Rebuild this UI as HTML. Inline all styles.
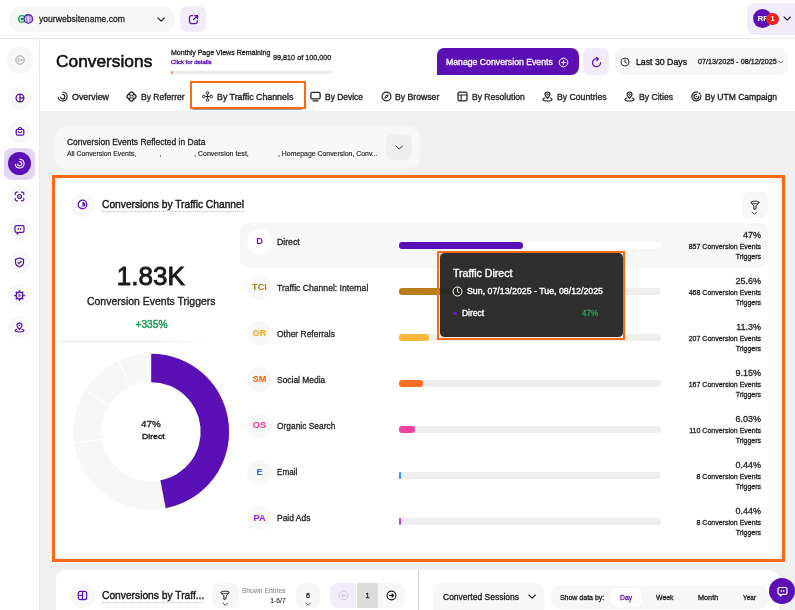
<!DOCTYPE html>
<html lang="en">
<head>
<meta charset="utf-8">
<title>Conversions</title>
<style>
*{box-sizing:border-box;margin:0;padding:0}
html,body{width:795px;height:610px;overflow:hidden;background:#fff;font-family:"Liberation Sans",sans-serif;color:#1f1f1f}
.abs{position:absolute}
#app{position:relative;width:795px;height:610px;overflow:hidden;background:transparent;will-change:transform}
.t{position:absolute;white-space:nowrap;line-height:1}
svg{position:absolute;overflow:visible}
</style>
</head>
<body>
<div id="app">

<!-- page background -->
<div class="abs" style="left:39px;top:110.5px;width:756px;height:500px;background:#f0f0f0;"></div>
<!-- header -->
<div class="abs" style="left:0px;top:37.5px;width:795px;height:1px;background:#e9e9e9;"></div>
<div class="abs" style="left:38.5px;top:38px;width:1px;height:572px;background:#e9e9e9;"></div>
<div class="abs" style="left:10px;top:6px;width:164px;height:26px;background:#f7f7f7;border-radius:9px;"></div>
<svg style="left:14px;top:11px" width="22" height="16" viewBox="14 11 22 16">
<circle cx="22" cy="18.900" r="5.300" fill="#dcf3e4"/>
<circle cx="22" cy="18.900" r="3.200" fill="#f0faf3" stroke="#22a35d" stroke-width="1.300"/>
<path d="M22 20.600c-.9-.7-1.700-1.300-1.700-2.100 0-.9 1.200-1.200 1.700-.4.500-.8 1.700-.5 1.700.4 0 .8-.8 1.400-1.700 2.100z" fill="#128a43"/>
<circle cx="28.300" cy="18.900" r="4.200" fill="#cdb8ef" stroke="#4c0fb2" stroke-width="1.400"/>
<path d="M28.300 14.800v8.200M24.300 18.900h8M25 16.900h6.600M25 20.900h6.600" stroke="#f3ecfc" stroke-width=".5" fill="none"/>
<ellipse cx="28.300" cy="18.900" rx="1.900" ry="4" fill="none" stroke="#7a45cf" stroke-width=".6"/>
</svg>
<div class="t" style="left:39.30px;top:13.66px;font-size:9.9px;color:#1f1f1f;transform:scaleX(0.8705);transform-origin:0 0;-webkit-text-stroke:0.3px #1f1f1f;">yourwebsitename.com</div>
<svg style="left:156.80px;top:16.60px" width="8.4" height="5.2" viewBox="0 0 8.4 5.2"><path d="M1 1L4.2 4.2L7.4 1" fill="none" stroke="#222" stroke-width="1.1" stroke-linecap="round" stroke-linejoin="round"/></svg>
<div class="abs" style="left:180.4px;top:6px;width:25.8px;height:26px;background:#f1ebfb;border-radius:7px;"></div>
<svg style="left:187.80px;top:13.50px" width="11" height="11" viewBox="0 0 11 11"><path d="M4.600 1.700H3.300A1.800 1.800 0 0 0 1.500 3.500v4.200A1.800 1.800 0 0 0 3.300 9.500h4.200a1.800 1.800 0 0 0 1.800-1.800V6.500" fill="none" stroke="#5a10b4" stroke-width="1.250" stroke-linecap="round"/><path d="M6.700 1.500h2.900v2.900M9.400 1.700L5.600 5.500" fill="none" stroke="#5a10b4" stroke-width="1.250" stroke-linecap="round" stroke-linejoin="round"/></svg>
<div class="abs" style="left:746.5px;top:3px;width:60px;height:32px;background:#f1ebfb;border-radius:8px;"></div>
<div class="abs" style="left:752.6px;top:9.400px;width:19px;height:19px;border-radius:50%;background:#5a10b4"></div>
<div class="t" style="left:757.60px;top:15.09px;font-size:8px;color:#fff;font-weight:700;">RF</div>
<div class="abs" style="left:766.3px;top:12.900px;width:12.500px;height:12.500px;border-radius:50%;background:#e8241a"></div>
<div class="t" style="left:770.51px;top:15.44px;font-size:7.5px;color:#fff;font-weight:700;">1</div>
<svg style="left:783.30px;top:16.20px" width="8.4" height="5.2" viewBox="0 0 8.4 5.2"><path d="M1 1L4.2 4.2L7.4 1" fill="none" stroke="#222" stroke-width="1.1" stroke-linecap="round" stroke-linejoin="round"/></svg>
<!-- sidebar -->
<div class="abs" style="left:6.9px;top:47px;width:26.4px;height:26.6px;background:#f7f7f7;border-radius:10px;"></div>
<div class="abs" style="left:8px;top:86.6px;width:23px;height:23px;border-radius:50%;background:#f8f8f8"></div>
<div class="abs" style="left:8px;top:119.7px;width:23px;height:23px;border-radius:50%;background:#f8f8f8"></div>
<div class="abs" style="left:8px;top:185.1px;width:23px;height:23px;border-radius:50%;background:#f8f8f8"></div>
<div class="abs" style="left:8px;top:217.7px;width:23px;height:23px;border-radius:50%;background:#f8f8f8"></div>
<div class="abs" style="left:8px;top:250.8px;width:23px;height:23px;border-radius:50%;background:#f8f8f8"></div>
<div class="abs" style="left:8px;top:283.6px;width:23px;height:23px;border-radius:50%;background:#f8f8f8"></div>
<div class="abs" style="left:8px;top:316.3px;width:23px;height:23px;border-radius:50%;background:#f8f8f8"></div>
<div class="abs" style="left:4px;top:148px;width:31px;height:31.6px;background:#e3d5f6;border-radius:8px;"></div>
<div class="abs" style="left:7.800px;top:151.900px;width:23.300px;height:23.300px;border-radius:50%;background:#5a10b4"></div>
<svg style="left:14.60px;top:55.20px" width="10" height="10" viewBox="0 0 10 10"><circle cx="5" cy="5" r="4.200" fill="none" stroke="#8d8d8d" stroke-width=".8"/><path d="M3.200 3v4" stroke="#8d8d8d" stroke-width=".8"/><path d="M4.600 5h2.600M6.200 4l1 1-1 1" fill="none" stroke="#8d8d8d" stroke-width=".7"/></svg>
<svg style="left:14.60px;top:93.10px" width="10" height="10" viewBox="0 0 10 10"><circle cx="5" cy="5" r="3.900" fill="none" stroke="#5a10b4" stroke-width="1.300"/><path d="M5 1.100v7.800M5 5h3.900" fill="none" stroke="#5a10b4" stroke-width="1.300"/></svg>
<svg style="left:14.60px;top:126.20px" width="10" height="10" viewBox="0 0 10 10"><rect x="1.200" y="3.300" width="7.600" height="5.900" rx="1.500" fill="none" stroke="#5a10b4" stroke-width="1.250"/><path d="M3.300 3.300a1.700 2 0 0 1 3.400 0" fill="none" stroke="#5a10b4" stroke-width="1.100"/><path d="M3.300 5.300a1.700 1.500 0 0 0 3.400 0" fill="none" stroke="#5a10b4" stroke-width="1.100" stroke-linecap="round"/></svg>
<svg style="left:14.10px;top:158.00px" width="11" height="11" viewBox="0 0 11 11"><path d="M5.700 1.200A4.400 4.400 0 1 1 1.300 6.400" fill="none" stroke="#fff" stroke-width="1.150" stroke-linecap="round"/><path d="M5.700 3.600A2.100 2.100 0 1 1 3.600 6.100" fill="none" stroke="#fff" stroke-width="1.150" stroke-linecap="round"/></svg>
<svg style="left:14.10px;top:191.10px" width="11" height="11" viewBox="0 0 11 11"><path d="M1.200 3.600V2.700a1.500 1.500 0 0 1 1.500-1.500h.9M7.400 1.200h.9a1.500 1.500 0 0 1 1.500 1.500v.9M9.800 7.400v.9a1.500 1.500 0 0 1-1.500 1.500h-.9M3.600 9.800h-.9a1.500 1.500 0 0 1-1.500-1.500v-.9" fill="none" stroke="#5a10b4" stroke-width="1.200" stroke-linecap="round"/><circle cx="5.500" cy="5.500" r="2" fill="none" stroke="#5a10b4" stroke-width="1.200"/><path d="M4.700 5.500l.6.600 1-1.100" fill="none" stroke="#5a10b4" stroke-width=".7"/></svg>
<svg style="left:14.10px;top:223.90px" width="11" height="11" viewBox="0 0 11 11"><path d="M2.600 1.500h5.800A1.600 1.600 0 0 1 10 3.100v3.600A1.600 1.600 0 0 1 8.400 8.300H5.200L3.200 10V8.300H2.600A1.600 1.600 0 0 1 1 6.700V3.100A1.600 1.600 0 0 1 2.600 1.500z" fill="none" stroke="#5a10b4" stroke-width="1.250" stroke-linejoin="round"/><path d="M4.300 4.300v1.200M6.700 4.300v1.200" stroke="#5a10b4" stroke-width="1.100" stroke-linecap="round"/></svg>
<svg style="left:14.10px;top:256.90px" width="11" height="11" viewBox="0 0 11 11"><path d="M5.500 1l4 1.400v3.200c0 2.200-1.700 3.600-4 4.400-2.300-.8-4-2.200-4-4.400V2.400z" fill="none" stroke="#5a10b4" stroke-width="1.250" stroke-linejoin="round"/><path d="M3.900 5.400l1.200 1.200 2.100-2.300" fill="none" stroke="#5a10b4" stroke-width="1.150" stroke-linecap="round" stroke-linejoin="round"/></svg>
<svg style="left:14.10px;top:289.70px" width="11" height="11" viewBox="0 0 11 11"><path d="M5.500 .9v1.200" stroke="#5a10b4" stroke-width="1.700" stroke-linecap="round" transform="rotate(0 5.500 5.500)"/><path d="M5.500 .9v1.200" stroke="#5a10b4" stroke-width="1.700" stroke-linecap="round" transform="rotate(45 5.500 5.500)"/><path d="M5.500 .9v1.200" stroke="#5a10b4" stroke-width="1.700" stroke-linecap="round" transform="rotate(90 5.500 5.500)"/><path d="M5.500 .9v1.200" stroke="#5a10b4" stroke-width="1.700" stroke-linecap="round" transform="rotate(135 5.500 5.500)"/><path d="M5.500 .9v1.200" stroke="#5a10b4" stroke-width="1.700" stroke-linecap="round" transform="rotate(180 5.500 5.500)"/><path d="M5.500 .9v1.200" stroke="#5a10b4" stroke-width="1.700" stroke-linecap="round" transform="rotate(225 5.500 5.500)"/><path d="M5.500 .9v1.200" stroke="#5a10b4" stroke-width="1.700" stroke-linecap="round" transform="rotate(270 5.500 5.500)"/><path d="M5.500 .9v1.200" stroke="#5a10b4" stroke-width="1.700" stroke-linecap="round" transform="rotate(315 5.500 5.500)"/><circle cx="5.500" cy="5.500" r="3.300" fill="#f8f8f8" stroke="#5a10b4" stroke-width="1.250"/><path d="M4.800 4.300l1.900 1.200-1.900 1.200z" fill="none" stroke="#5a10b4" stroke-width=".8" stroke-linejoin="round"/></svg>
<svg style="left:14.10px;top:322.30px" width="11" height="11" viewBox="0 0 11 11"><path d="M5.500 7.500C4 6 3 4.900 3 3.600a2.500 2.500 0 0 1 5 0C8 4.900 7 6 5.500 7.500z" fill="none" stroke="#5a10b4" stroke-width="1.150" stroke-linejoin="round"/><circle cx="5.500" cy="3.600" r=".8" fill="#5a10b4"/><path d="M2.900 7.300C1.700 7.600 1.100 8 1.100 8.600c0 .9 2 1.400 4.400 1.400s4.400-.5 4.400-1.400c0-.6-.6-1-1.800-1.300" fill="none" stroke="#5a10b4" stroke-width="1.150" stroke-linecap="round"/></svg>
<!-- title row -->
<div class="t" style="left:56.30px;top:53.10px;font-size:17.2px;color:#111;transform:scaleX(1.0080);transform-origin:0 0;-webkit-text-stroke:0.55px #111;">Conversions</div>
<div class="t" style="left:171.30px;top:49.48px;font-size:7.2px;color:#1f1f1f;transform:scaleX(0.9807);transform-origin:0 0;-webkit-text-stroke:0.3px #1f1f1f;">Monthly Page Views Remaining</div>
<div class="t" style="left:171.30px;top:58.87px;font-size:6px;color:#5a10b4;transform:scaleX(0.9954);transform-origin:0 0;-webkit-text-stroke:0.35px #5a10b4;">Click for details</div>
<div class="t" style="left:273.00px;top:53.58px;font-size:7.2px;color:#1f1f1f;transform:scaleX(1.0077);transform-origin:0 0;-webkit-text-stroke:0.3px #1f1f1f;">99,810 of 100,000</div>
<div class="abs" style="left:171.3px;top:70.8px;width:160.6px;height:3.6px;background:#ebebeb;border-radius:2px;"></div>
<div class="abs" style="left:171.3px;top:70.8px;width:2.2px;height:3.6px;background:#f58b43;border-radius:1px;"></div>
<div class="abs" style="left:436.500px;top:48.400px;width:142.200px;height:26.700px;background:#5a10b4;border-radius:7px 8px 8px 0"></div>
<div class="t" style="left:446.30px;top:57.80px;font-size:8.6px;color:#fff;transform:scaleX(1.0116);transform-origin:0 0;-webkit-text-stroke:0.3px #fff;">Manage Conversion Events</div>
<svg style="left:558.30px;top:56.50px" width="11" height="11" viewBox="0 0 11 11"><circle cx="5.500" cy="5.500" r="4.300" fill="none" stroke="#fff" stroke-width="1"/><path d="M5.500 3.500v4M3.500 5.500h4" stroke="#fff" stroke-width="1.100" stroke-linecap="round"/></svg>
<div class="abs" style="left:583px;top:48.4px;width:26.3px;height:26.7px;background:#f1ebfb;border-radius:7px;"></div>
<svg style="left:590.50px;top:56.50px" width="11" height="11" viewBox="0 0 11 11"><path d="M6.700 1.900A4 4 0 1 0 9.500 5.700" fill="none" stroke="#5a10b4" stroke-width="1.200" stroke-linecap="round"/><path d="M5.600 .5l1.700 1.400-1.500 1.600" fill="none" stroke="#5a10b4" stroke-width="1.200" stroke-linecap="round" stroke-linejoin="round"/></svg>
<div class="abs" style="left:614.6px;top:48.4px;width:173.2px;height:26.7px;background:#f7f7f7;border-radius:8px;"></div>
<svg style="left:620.30px;top:57.00px" width="10" height="10" viewBox="0 0 10 10"><circle cx="5" cy="5" r="4" fill="none" stroke="#222" stroke-width=".9"/><path d="M5 2.700V5.100l1.500.9" fill="none" stroke="#222" stroke-width=".9" stroke-linecap="round"/></svg>
<div class="t" style="left:635.60px;top:57.60px;font-size:9px;color:#1a1a1a;transform:scaleX(0.9709);transform-origin:0 0;-webkit-text-stroke:0.35px #1a1a1a;">Last 30 Days</div>
<div class="t" style="left:698.20px;top:58.68px;font-size:6.8px;color:#1f1f1f;transform:scaleX(1.0651);transform-origin:0 0;-webkit-text-stroke:0.3px #1f1f1f;">07/13/2025 - 08/12/2025</div>
<svg style="left:777.50px;top:59.55px" width="6.2" height="4.1" viewBox="0 0 6.2 4.1"><path d="M1 1L3.1 3.1L5.2 1" fill="none" stroke="#444" stroke-width="0.8" stroke-linecap="round" stroke-linejoin="round"/></svg>
<!-- tabs -->
<div class="t" style="left:72.20px;top:92.50px;font-size:9px;color:#1f1f1f;transform:scaleX(0.9863);transform-origin:0 0;-webkit-text-stroke:0.35px #1f1f1f;">Overview</div>
<div class="t" style="left:141.10px;top:92.50px;font-size:9px;color:#1f1f1f;transform:scaleX(0.9475);transform-origin:0 0;-webkit-text-stroke:0.35px #1f1f1f;">By Referrer</div>
<div class="t" style="left:216.60px;top:92.50px;font-size:9px;color:#1f1f1f;transform:scaleX(0.9798);transform-origin:0 0;-webkit-text-stroke:0.35px #1f1f1f;">By Traffic Channels</div>
<div class="t" style="left:324.80px;top:92.50px;font-size:9px;color:#1f1f1f;transform:scaleX(0.9379);transform-origin:0 0;-webkit-text-stroke:0.35px #1f1f1f;">By Device</div>
<div class="t" style="left:395.30px;top:92.50px;font-size:9px;color:#1f1f1f;transform:scaleX(0.9627);transform-origin:0 0;-webkit-text-stroke:0.35px #1f1f1f;">By Browser</div>
<div class="t" style="left:471.60px;top:92.50px;font-size:9px;color:#1f1f1f;transform:scaleX(0.9508);transform-origin:0 0;-webkit-text-stroke:0.35px #1f1f1f;">By Resolution</div>
<div class="t" style="left:557.10px;top:92.50px;font-size:9px;color:#1f1f1f;transform:scaleX(0.9625);transform-origin:0 0;-webkit-text-stroke:0.35px #1f1f1f;">By Countries</div>
<div class="t" style="left:639.00px;top:92.50px;font-size:9px;color:#1f1f1f;transform:scaleX(0.9573);transform-origin:0 0;-webkit-text-stroke:0.35px #1f1f1f;">By Cities</div>
<div class="t" style="left:704.90px;top:92.50px;font-size:9px;color:#1f1f1f;transform:scaleX(0.9470);transform-origin:0 0;-webkit-text-stroke:0.35px #1f1f1f;">By UTM Campaign</div>
<svg style="left:56.90px;top:91.40px" width="11" height="11" viewBox="0 0 11 11"><path d="M5.700 1A4.500 4.500 0 1 1 1.200 6.300" fill="none" stroke="#222" stroke-width="1.2" stroke-linecap="round"/><path d="M5.700 3.400A2.200 2.200 0 1 1 3.500 6" fill="none" stroke="#222" stroke-width="1.2" stroke-linecap="round"/></svg>
<svg style="left:126.10px;top:91.40px" width="11" height="11" viewBox="0 0 11 11"><rect x="1.900" y="1.900" width="7.200" height="7.200" rx="1.300" fill="none" stroke="#222" stroke-width="1.300" transform="rotate(45 5.500 5.500)"/><path d="M3.200 3.200l1.300 1.300M7.800 3.200L6.500 4.500M3.200 7.800l1.300-1.300M7.800 7.800L6.500 6.500" stroke="#222" stroke-width="1.100"/><rect x="4.300" y="4.300" width="2.400" height="2.400" rx=".5" fill="none" stroke="#222" stroke-width=".9" transform="rotate(45 5.500 5.500)"/></svg>
<svg style="left:201.50px;top:91.40px" width="11" height="11" viewBox="0 0 11 11"><circle cx="5.500" cy="1.900" r="1.300" fill="none" stroke="#222" stroke-width="1"/><circle cx="5.500" cy="9.100" r="1.300" fill="none" stroke="#222" stroke-width="1"/><circle cx="1.800" cy="5.500" r="1.300" fill="none" stroke="#222" stroke-width="1"/><circle cx="9.200" cy="5.500" r="1.300" fill="none" stroke="#222" stroke-width="1"/><path d="M5.500 3.200v4.600M3.100 5.500h4.800" stroke="#222" stroke-width="1"/></svg>
<svg style="left:310.00px;top:91.40px" width="11" height="11" viewBox="0 0 11 11"><rect x=".9" y="1.300" width="9.200" height="6.600" rx="1.500" fill="none" stroke="#222" stroke-width="1.300"/><path d="M3.100 9.900h4.800" stroke="#222" stroke-width="1.300" stroke-linecap="round"/></svg>
<svg style="left:380.50px;top:91.40px" width="11" height="11" viewBox="0 0 11 11"><circle cx="5.500" cy="5.500" r="4.400" fill="none" stroke="#222" stroke-width="1.200"/><path d="M7.200 3.800L6.300 6.300 3.800 7.200l.9-2.500z" fill="none" stroke="#222" stroke-width="1" stroke-linejoin="round"/></svg>
<svg style="left:456.60px;top:91.40px" width="11" height="11" viewBox="0 0 11 11"><rect x="1" y="1.200" width="9" height="8.600" rx="1.600" fill="none" stroke="#222" stroke-width="1.250"/><path d="M1 4h9M4.200 4v5.800" stroke="#222" stroke-width="1.150"/></svg>
<svg style="left:542.00px;top:91.40px" width="11" height="11" viewBox="0 0 11 11"><path d="M5.500 7.300C4 5.800 3 4.800 3 3.500a2.500 2.500 0 0 1 5 0C8 4.800 7 5.800 5.500 7.300z" fill="none" stroke="#222" stroke-width="1.200" stroke-linejoin="round"/><circle cx="5.500" cy="3.500" r=".8" fill="none" stroke="#222" stroke-width=".9"/><path d="M2.800 7C1.600 7.300 1 7.900 1 8.500c0 .9 2 1.500 4.500 1.500s4.500-.6 4.500-1.500c0-.6-.6-1.200-1.800-1.500" fill="none" stroke="#222" stroke-width="1.200" stroke-linecap="round"/></svg>
<svg style="left:624.00px;top:91.40px" width="11" height="11" viewBox="0 0 11 11"><path d="M5.500 7.300C4 5.800 3 4.800 3 3.500a2.500 2.500 0 0 1 5 0C8 4.800 7 5.800 5.500 7.300z" fill="none" stroke="#222" stroke-width="1.200" stroke-linejoin="round"/><circle cx="5.500" cy="3.500" r=".8" fill="none" stroke="#222" stroke-width=".9"/><path d="M2.800 7C1.600 7.300 1 7.900 1 8.500c0 .9 2 1.500 4.500 1.500s4.500-.6 4.500-1.500c0-.6-.6-1.200-1.800-1.500" fill="none" stroke="#222" stroke-width="1.200" stroke-linecap="round"/></svg>
<svg style="left:690.50px;top:91.40px" width="11" height="11" viewBox="0 0 11 11"><path d="M9.700 4.200A4.500 4.500 0 1 1 6.800 1.200" fill="none" stroke="#222" stroke-width="1.200" stroke-linecap="round"/><path d="M7.700 5.200A2.400 2.400 0 1 1 5.800 3.300" fill="none" stroke="#222" stroke-width="1.100" stroke-linecap="round"/><circle cx="5.500" cy="5.500" r=".8" fill="#222"/><circle cx="8.700" cy="2.300" r=".9" fill="#222"/><circle cx="3.900" cy="7.400" r=".7" fill="#222"/><circle cx="7.100" cy="7.700" r=".7" fill="#222"/><circle cx="3.100" cy="4.400" r=".7" fill="#222"/></svg>
<div class="abs" style="left:193px;top:108.8px;width:108.5px;height:1.6px;background:#8c9fb2;"></div>
<div class="abs" style="left:190px;top:80.500px;width:115.500px;height:28.700px;border:2px solid #fb6a0e"></div>
<!-- conversion events reflected card -->
<div class="abs" style="left:55.6px;top:128px;width:363px;height:39px;background:#f8f8f8;border-radius:10px;box-shadow:0 0 0 2px rgba(255,255,255,.35);"></div>
<div class="t" style="left:66.90px;top:138.20px;font-size:9px;color:#1f1f1f;transform:scaleX(0.9410);transform-origin:0 0;-webkit-text-stroke:0.3px #1f1f1f;">Conversion Events Reflected in Data</div>
<div class="t" style="left:66.90px;top:150.68px;font-size:6.8px;color:#1f1f1f;transform:scaleX(1.0118);transform-origin:0 0;-webkit-text-stroke:0.15px #1f1f1f;">All Conversion Events,</div>
<div class="t" style="left:159.50px;top:150.68px;font-size:6.8px;color:#1f1f1f;-webkit-text-stroke:0.1px #1f1f1f;">,</div>
<div class="t" style="left:194.00px;top:150.68px;font-size:6.8px;color:#1f1f1f;transform:scaleX(1.0361);transform-origin:0 0;-webkit-text-stroke:0.15px #1f1f1f;">, Conversion test,</div>
<div class="t" style="left:278.30px;top:150.68px;font-size:6.8px;color:#1f1f1f;transform:scaleX(1.0152);transform-origin:0 0;-webkit-text-stroke:0.15px #1f1f1f;">, Homepage Conversion, Conv...</div>
<div class="abs" style="left:386px;top:134.3px;width:26.4px;height:26px;background:#efefef;border-radius:7px;"></div>
<svg style="left:394.80px;top:144.70px" width="8.4" height="5.2" viewBox="0 0 8.4 5.2"><path d="M1 1L4.2 4.2L7.4 1" fill="none" stroke="#333" stroke-width="1" stroke-linecap="round" stroke-linejoin="round"/></svg>
<!-- main card -->
<div class="abs" style="left:55px;top:178px;width:727px;height:381px;background:#fff;border-radius:10px;"></div>
<div class="abs" style="left:52px;top:175px;width:732.500px;height:386.500px;border:3px solid #fb6a0e"></div>
<div class="abs" style="left:70.500px;top:192.700px;width:24px;height:24px;border-radius:50%;background:#f8f8f8"></div>
<svg style="left:76.90px;top:199.30px" width="11" height="11" viewBox="0 0 11 11"><circle cx="5.500" cy="5.500" r="4.300" fill="none" stroke="#5a10b4" stroke-width="1.200"/><path d="M5.500 5.700V2.700A2.900 2.900 0 0 1 7.700 7.500z" fill="#5a10b4"/><path d="M5.500 5.700L7.700 7.500A2.900 2.900 0 0 1 4 8z" fill="#5a10b4" opacity=".45"/></svg>
<div class="t" style="left:102.30px;top:199.08px;font-size:11.3px;color:#1a1a1a;transform:scaleX(0.9057);transform-origin:0 0;-webkit-text-stroke:0.45px #1a1a1a;">Conversions by Traffic Channel</div>
<div class="abs" style="left:102.300px;top:211.200px;width:142px;height:0;border-top:1px dotted #c4c4c4"></div>
<div class="abs" style="left:742.3px;top:192px;width:25.7px;height:25.7px;background:#f7f7f7;border-radius:7px;"></div>
<svg style="left:749.70px;top:199.70px" width="10" height="10" viewBox="0 0 10 10"><path d="M.9 2.400C.9 .8 9.100 .8 9.100 2.400L6.100 5.900V8.700L3.900 9.500V5.900z" fill="none" stroke="#222" stroke-width="1" stroke-linejoin="round"/><path d="M.9 2.400C.9 3.900 9.100 3.900 9.100 2.400" fill="none" stroke="#222" stroke-width=".8"/></svg>
<svg style="left:751.30px;top:211.35px" width="6.6" height="4.3" viewBox="0 0 6.6 4.3"><path d="M1 1L3.3 3.3L5.6 1" fill="none" stroke="#333" stroke-width="0.9" stroke-linecap="round" stroke-linejoin="round"/></svg>
<div class="t" style="left:116.85px;top:263.10px;font-size:26px;color:#1a1a1a;-webkit-text-stroke:0.9px #1a1a1a;">1.83K</div>
<div class="t" style="left:87.05px;top:296.62px;font-size:10.2px;color:#1f1f1f;transform:scaleX(1.0268);transform-origin:0 0;-webkit-text-stroke:0.35px #1f1f1f;">Conversion Events Triggers</div>
<div class="t" style="left:135.50px;top:319.72px;font-size:10.2px;color:#1f9d57;-webkit-text-stroke:0.5px #1f9d57;">+335%</div>
<div class="abs" style="left:60px;top:340.500px;width:182px;height:1px;background:linear-gradient(90deg,#e6e6e6 0%,#e9e9e9 55%,#ffffff 85%)"></div>
<!-- donut -->
<svg style="left:0;top:0" width="795" height="610" viewBox="0 0 795 610">
<circle cx="151.2" cy="431.7" r="63.7" fill="none" stroke="#f7f7f7" stroke-width="28.400000000000006"/>
<path d="M151.20 353.80A77.9 77.9 0 0 1 165.71 508.24L160.42 480.33A49.5 49.5 0 0 0 151.20 382.20Z" fill="#5a10b4"/>
<line x1="103.24" y1="438.90" x2="73.17" y2="443.41" stroke="#fff" stroke-width="1.200"/>
<line x1="110.14" y1="405.88" x2="84.41" y2="389.70" stroke="#fff" stroke-width="1.200"/>
<line x1="130.79" y1="387.70" x2="118.00" y2="360.13" stroke="#fff" stroke-width="1.200"/>
<line x1="148.52" y1="383.27" x2="146.84" y2="352.92" stroke="#fff" stroke-width="1.200"/>
</svg>
<div class="t" style="left:141.40px;top:418.81px;font-size:9.6px;color:#1f1f1f;transform:scaleX(1.0311);transform-origin:0 0;-webkit-text-stroke:0.35px #1f1f1f;">47%</div>
<div class="t" style="left:142.25px;top:432.59px;font-size:8px;color:#1f1f1f;transform:scaleX(1.0866);transform-origin:0 0;-webkit-text-stroke:0.4px #1f1f1f;">Direct</div>
<!-- channel rows -->
<div class="abs" style="left:240px;top:223px;width:528px;height:45.3px;background:#f7f7f7;border-radius:9px;"></div>
<div class="abs" style="left:246.900px;top:229.40px;width:25px;height:25px;border-radius:50%;background:#fff"></div>
<div class="t" style="left:256.18px;top:237.41px;font-size:9.2px;color:#5a10b4;font-weight:700;">D</div>
<div class="t" style="left:277.00px;top:237.50px;font-size:9px;color:#1f1f1f;transform:scaleX(0.9653);transform-origin:0 0;-webkit-text-stroke:0.3px #1f1f1f;">Direct</div>
<div class="abs" style="left:399.3px;top:242.3px;width:262px;height:6.4px;background:#ffffff;border-radius:3.2px;"></div>
<div class="abs" style="left:399.3px;top:242.3px;width:123.4px;height:6.4px;background:#5a10b4;border-radius:3.2px;"></div>
<div class="t" style="left:743.08px;top:231.20px;font-size:9px;color:#1f1f1f;-webkit-text-stroke:0.3px #1f1f1f;">47%</div>
<div class="t" style="left:688.71px;top:243.28px;font-size:7px;color:#1f1f1f;-webkit-text-stroke:0.3px #1f1f1f;">857 Conversion Events</div>
<div class="t" style="left:735.68px;top:252.78px;font-size:7px;color:#1f1f1f;-webkit-text-stroke:0.3px #1f1f1f;">Triggers</div>
<div class="abs" style="left:246.900px;top:275.42px;width:25px;height:25px;border-radius:50%;background:#f8f8f8"></div>
<div class="t" style="left:252.09px;top:283.43px;font-size:9.2px;color:#b87a16;font-weight:700;">TCI</div>
<div class="t" style="left:277.00px;top:283.52px;font-size:9px;color:#1f1f1f;transform:scaleX(0.9554);transform-origin:0 0;-webkit-text-stroke:0.3px #1f1f1f;">Traffic Channel: Internal</div>
<div class="abs" style="left:399.3px;top:288.32px;width:262px;height:6.4px;background:#eeeeee;border-radius:3.2px;"></div>
<div class="abs" style="left:399.3px;top:288.32px;width:67.3px;height:6.4px;background:#b97d1a;border-radius:3.2px;"></div>
<div class="t" style="left:735.57px;top:277.22px;font-size:9px;color:#1f1f1f;-webkit-text-stroke:0.3px #1f1f1f;">25.6%</div>
<div class="t" style="left:688.71px;top:289.30px;font-size:7px;color:#1f1f1f;-webkit-text-stroke:0.3px #1f1f1f;">468 Conversion Events</div>
<div class="t" style="left:735.68px;top:298.80px;font-size:7px;color:#1f1f1f;-webkit-text-stroke:0.3px #1f1f1f;">Triggers</div>
<div class="abs" style="left:246.900px;top:321.44px;width:25px;height:25px;border-radius:50%;background:#f8f8f8"></div>
<div class="t" style="left:252.61px;top:329.45px;font-size:9.2px;color:#f5a623;font-weight:700;">OR</div>
<div class="t" style="left:277.00px;top:329.54px;font-size:9px;color:#1f1f1f;transform:scaleX(0.9410);transform-origin:0 0;-webkit-text-stroke:0.3px #1f1f1f;">Other Referrals</div>
<div class="abs" style="left:399.3px;top:334.34px;width:262px;height:6.4px;background:#eeeeee;border-radius:3.2px;"></div>
<div class="abs" style="left:399.3px;top:334.34px;width:29.7px;height:6.4px;background:#fbb93c;border-radius:3.2px;"></div>
<div class="t" style="left:736.24px;top:323.24px;font-size:9px;color:#1f1f1f;-webkit-text-stroke:0.3px #1f1f1f;">11.3%</div>
<div class="t" style="left:688.71px;top:335.32px;font-size:7px;color:#1f1f1f;-webkit-text-stroke:0.3px #1f1f1f;">207 Conversion Events</div>
<div class="t" style="left:735.68px;top:344.82px;font-size:7px;color:#1f1f1f;-webkit-text-stroke:0.3px #1f1f1f;">Triggers</div>
<div class="abs" style="left:246.900px;top:367.46px;width:25px;height:25px;border-radius:50%;background:#f8f8f8"></div>
<div class="t" style="left:252.61px;top:375.47px;font-size:9.2px;color:#f2640c;font-weight:700;">SM</div>
<div class="t" style="left:277.00px;top:375.56px;font-size:9px;color:#1f1f1f;transform:scaleX(0.9373);transform-origin:0 0;-webkit-text-stroke:0.3px #1f1f1f;">Social Media</div>
<div class="abs" style="left:399.3px;top:380.36px;width:262px;height:6.4px;background:#eeeeee;border-radius:3.2px;"></div>
<div class="abs" style="left:399.3px;top:380.36px;width:24.2px;height:6.4px;background:#f96f1e;border-radius:3.2px;"></div>
<div class="t" style="left:735.57px;top:369.26px;font-size:9px;color:#1f1f1f;-webkit-text-stroke:0.3px #1f1f1f;">9.15%</div>
<div class="t" style="left:688.71px;top:381.34px;font-size:7px;color:#1f1f1f;-webkit-text-stroke:0.3px #1f1f1f;">167 Conversion Events</div>
<div class="t" style="left:735.68px;top:390.84px;font-size:7px;color:#1f1f1f;-webkit-text-stroke:0.3px #1f1f1f;">Triggers</div>
<div class="abs" style="left:246.900px;top:413.48px;width:25px;height:25px;border-radius:50%;background:#f8f8f8"></div>
<div class="t" style="left:252.86px;top:421.49px;font-size:9.2px;color:#ee2f93;font-weight:700;">OS</div>
<div class="t" style="left:277.00px;top:421.58px;font-size:9px;color:#1f1f1f;transform:scaleX(0.9323);transform-origin:0 0;-webkit-text-stroke:0.3px #1f1f1f;">Organic Search</div>
<div class="abs" style="left:399.3px;top:426.38px;width:262px;height:6.4px;background:#eeeeee;border-radius:3.2px;"></div>
<div class="abs" style="left:399.3px;top:426.38px;width:15.8px;height:6.4px;background:#ef3fa0;border-radius:3.2px;"></div>
<div class="t" style="left:735.57px;top:415.28px;font-size:9px;color:#1f1f1f;-webkit-text-stroke:0.3px #1f1f1f;">6.03%</div>
<div class="t" style="left:689.24px;top:427.36px;font-size:7px;color:#1f1f1f;-webkit-text-stroke:0.3px #1f1f1f;">110 Conversion Events</div>
<div class="t" style="left:735.68px;top:436.86px;font-size:7px;color:#1f1f1f;-webkit-text-stroke:0.3px #1f1f1f;">Triggers</div>
<div class="abs" style="left:246.900px;top:459.50px;width:25px;height:25px;border-radius:50%;background:#f8f8f8"></div>
<div class="t" style="left:256.43px;top:467.51px;font-size:9.2px;color:#2468e8;font-weight:700;">E</div>
<div class="t" style="left:277.00px;top:467.60px;font-size:9px;color:#1f1f1f;transform:scaleX(0.9016);transform-origin:0 0;-webkit-text-stroke:0.3px #1f1f1f;">Email</div>
<div class="abs" style="left:399.3px;top:472.4px;width:262px;height:6.4px;background:#eeeeee;border-radius:3.2px;"></div>
<div class="abs" style="left:399.3px;top:472.4px;width:2.2px;height:6.4px;background:#3d8df2;border-radius:3.2px;"></div>
<div class="t" style="left:735.57px;top:461.30px;font-size:9px;color:#1f1f1f;-webkit-text-stroke:0.3px #1f1f1f;">0.44%</div>
<div class="t" style="left:696.51px;top:473.38px;font-size:7px;color:#1f1f1f;-webkit-text-stroke:0.3px #1f1f1f;">8 Conversion Events</div>
<div class="t" style="left:735.68px;top:482.88px;font-size:7px;color:#1f1f1f;-webkit-text-stroke:0.3px #1f1f1f;">Triggers</div>
<div class="abs" style="left:246.900px;top:505.52px;width:25px;height:25px;border-radius:50%;background:#f8f8f8"></div>
<div class="t" style="left:253.45px;top:513.53px;font-size:9.2px;color:#a21de0;font-weight:700;">PA</div>
<div class="t" style="left:277.00px;top:513.62px;font-size:9px;color:#1f1f1f;transform:scaleX(0.9400);transform-origin:0 0;-webkit-text-stroke:0.3px #1f1f1f;">Paid Ads</div>
<div class="abs" style="left:399.3px;top:518.42px;width:262px;height:6.4px;background:#eeeeee;border-radius:3.2px;"></div>
<div class="abs" style="left:399.3px;top:518.42px;width:2.2px;height:6.4px;background:#b145e8;border-radius:3.2px;"></div>
<div class="t" style="left:735.57px;top:507.32px;font-size:9px;color:#1f1f1f;-webkit-text-stroke:0.3px #1f1f1f;">0.44%</div>
<div class="t" style="left:696.51px;top:519.40px;font-size:7px;color:#1f1f1f;-webkit-text-stroke:0.3px #1f1f1f;">8 Conversion Events</div>
<div class="t" style="left:735.68px;top:528.90px;font-size:7px;color:#1f1f1f;-webkit-text-stroke:0.3px #1f1f1f;">Triggers</div>
<!-- tooltip -->
<div class="abs" style="left:439.6px;top:253.4px;width:183.3px;height:83.8px;background:rgba(38,38,38,.96);border-radius:4.5px;"></div>
<div class="abs" style="left:437px;top:250.900px;width:188.400px;height:89.100px;border:2.400px solid #fb6a0e"></div>
<div class="t" style="left:453.40px;top:268.57px;font-size:10.3px;color:#fff;transform:scaleX(1.0277);transform-origin:0 0;-webkit-text-stroke:0.35px #fff;">Traffic Direct</div>
<svg style="left:452.20px;top:285.70px" width="11" height="11" viewBox="0 0 11 11"><circle cx="5.500" cy="5.500" r="4.500" fill="none" stroke="#fff" stroke-width="1"/><path d="M5.500 2.900V5.600l1.700 1" fill="none" stroke="#fff" stroke-width="1" stroke-linecap="round"/></svg>
<div class="t" style="left:466.70px;top:286.80px;font-size:9px;color:#fff;transform:scaleX(0.9775);transform-origin:0 0;-webkit-text-stroke:0.35px #fff;">Sun, 07/13/2025 - Tue, 08/12/2025</div>
<div class="abs" style="left:452.900px;top:311.700px;width:3.800px;height:3.800px;border-radius:50%;background:#6a1fd6"></div>
<div class="t" style="left:461.70px;top:308.90px;font-size:8.8px;color:#fff;transform:scaleX(0.9615);transform-origin:0 0;-webkit-text-stroke:0.35px #fff;">Direct</div>
<div class="t" style="left:581.70px;top:309.00px;font-size:8.6px;color:#22a35d;transform:scaleX(0.9359);transform-origin:0 0;-webkit-text-stroke:0.3px #22a35d;">47%</div>
<!-- bottom cards -->
<div class="abs" style="left:56.3px;top:569.5px;width:723px;height:60px;background:#fff;border-radius:10px 10px 0 0;"></div>
<div class="abs" style="left:418.2px;top:569.5px;width:1px;height:41px;background:#d2d2d2;"></div>
<div class="abs" style="left:70.400px;top:583.400px;width:24.400px;height:24.400px;border-radius:50%;background:#f8f8f8"></div>
<svg style="left:76.90px;top:590.10px" width="11" height="11" viewBox="0 0 11 11"><rect x="1.300" y="1.400" width="8.400" height="8.200" rx="2" fill="none" stroke="#5a10b4" stroke-width="1.150"/><path d="M5.500 1.400v8.200M1.300 5.500h4.200" stroke="#5a10b4" stroke-width="1.150"/></svg>
<div class="t" style="left:102.40px;top:589.88px;font-size:11.3px;color:#1a1a1a;transform:scaleX(0.9068);transform-origin:0 0;-webkit-text-stroke:0.45px #1a1a1a;">Conversions by Traff...</div>
<div class="abs" style="left:102.400px;top:602px;width:102px;height:0;border-top:1px dotted #c4c4c4"></div>
<div class="abs" style="left:212.3px;top:582.7px;width:26.4px;height:25.7px;background:#f7f7f7;border-radius:7px;"></div>
<svg style="left:220.40px;top:590.00px" width="10" height="10" viewBox="0 0 10 10"><path d="M.9 2.400C.9 .8 9.100 .8 9.100 2.400L6.100 5.900V8.700L3.900 9.500V5.900z" fill="none" stroke="#222" stroke-width="1" stroke-linejoin="round"/><path d="M.9 2.400C.9 3.900 9.100 3.900 9.100 2.400" fill="none" stroke="#222" stroke-width=".8"/></svg>
<svg style="left:222.10px;top:601.85px" width="6.6" height="4.3" viewBox="0 0 6.6 4.3"><path d="M1 1L3.3 3.3L5.6 1" fill="none" stroke="#333" stroke-width="0.9" stroke-linecap="round" stroke-linejoin="round"/></svg>
<div class="t" style="left:241.80px;top:588.18px;font-size:6.8px;color:#8b8b8b;-webkit-text-stroke:0.1px #8b8b8b;">Shown Entries</div>
<div class="t" style="left:270.30px;top:597.58px;font-size:6.8px;color:#333;-webkit-text-stroke:0.15px #333;">1-6/7</div>
<div class="abs" style="left:296.2px;top:582.6px;width:23.6px;height:25.7px;background:#f7f7f7;border-radius:8px;"></div>
<div class="t" style="left:306.00px;top:592.48px;font-size:7.2px;color:#1f1f1f;-webkit-text-stroke:0.3px #1f1f1f;">6</div>
<svg style="left:304.80px;top:602.10px" width="6.4" height="4.2" viewBox="0 0 6.4 4.2"><path d="M1 1L3.2 3.2L5.4 1" fill="none" stroke="#444" stroke-width="0.9" stroke-linecap="round" stroke-linejoin="round"/></svg>
<div class="abs" style="left:330.1px;top:582.6px;width:26.4px;height:25.7px;background:#f3edfb;border-radius:8px 0 0 8px;"></div>
<svg style="left:337.70px;top:590.30px" width="11" height="11" viewBox="0 0 11 11"><circle cx="5.500" cy="5.500" r="4.400" fill="none" stroke="#d5c3f0" stroke-width="1"/><path d="M7.600 5.500H3.600M5 4L3.500 5.500 5 7" fill="none" stroke="#d5c3f0" stroke-width="1" stroke-linecap="round" stroke-linejoin="round"/></svg>
<div class="abs" style="left:356.5px;top:582.6px;width:21.9px;height:25.7px;background:#dcdcdc;"></div>
<div class="t" style="left:365.40px;top:592.08px;font-size:7.2px;color:#1f1f1f;-webkit-text-stroke:0.3px #1f1f1f;">1</div>
<div class="abs" style="left:378.4px;top:582.6px;width:26.4px;height:25.7px;background:#f7f7f7;border-radius:0 8px 8px 0;"></div>
<svg style="left:386.30px;top:590.30px" width="11" height="11" viewBox="0 0 11 11"><circle cx="5.500" cy="5.500" r="4.400" fill="none" stroke="#1a1a1a" stroke-width="1.100"/><path d="M3.400 5.500H7.400M6 4L7.500 5.500 6 7" fill="none" stroke="#1a1a1a" stroke-width="1.100" stroke-linecap="round" stroke-linejoin="round"/></svg>
<div class="abs" style="left:432.7px;top:582.7px;width:111.2px;height:30px;background:#f7f7f7;border-radius:9px 9px 0 0;"></div>
<div class="t" style="left:442.80px;top:592.60px;font-size:9px;color:#1f1f1f;transform:scaleX(0.9435);transform-origin:0 0;-webkit-text-stroke:0.35px #1f1f1f;">Converted Sessions</div>
<svg style="left:528.40px;top:594.40px" width="8.4" height="5.2" viewBox="0 0 8.4 5.2"><path d="M1 1L4.2 4.2L7.4 1" fill="none" stroke="#222" stroke-width="1.1" stroke-linecap="round" stroke-linejoin="round"/></svg>
<div class="abs" style="left:551.2px;top:586.3px;width:217.2px;height:22.5px;background:#f7f7f7;border-radius:8px;"></div>
<div class="t" style="left:559.90px;top:593.78px;font-size:7px;color:#1f1f1f;-webkit-text-stroke:0.3px #1f1f1f;">Show data by:</div>
<div class="abs" style="left:610.6px;top:588.2px;width:31.4px;height:18.4px;background:#fff;border-radius:6px;"></div>
<div class="t" style="left:620.20px;top:593.78px;font-size:7px;color:#5a10b4;transform:scaleX(0.9797);transform-origin:0 0;-webkit-text-stroke:0.3px #5a10b4;">Day</div>
<div class="t" style="left:656.10px;top:593.78px;font-size:7px;color:#1f1f1f;transform:scaleX(0.9898);transform-origin:0 0;-webkit-text-stroke:0.3px #1f1f1f;">Week</div>
<div class="t" style="left:697.80px;top:593.78px;font-size:7px;color:#1f1f1f;transform:scaleX(1.0376);transform-origin:0 0;-webkit-text-stroke:0.3px #1f1f1f;">Month</div>
<div class="t" style="left:742.70px;top:593.78px;font-size:7px;color:#1f1f1f;transform:scaleX(0.9042);transform-origin:0 0;-webkit-text-stroke:0.3px #1f1f1f;">Year</div>
<div class="abs" style="left:769.300px;top:578.300px;width:26.200px;height:26.200px;border-radius:50%;background:#5a10b4"></div>
<svg style="left:776.90px;top:586.10px" width="11" height="11" viewBox="0 0 11 11"><path d="M2.600 1.500h5.800A1.600 1.600 0 0 1 10 3.100v3.600A1.600 1.600 0 0 1 8.400 8.300H5.200L3.200 10V8.300H2.600A1.600 1.600 0 0 1 1 6.700V3.100A1.600 1.600 0 0 1 2.600 1.500z" fill="none" stroke="#fff" stroke-width="1.200" stroke-linejoin="round"/><path d="M4.300 4.300v1.200M6.700 4.300v1.200" stroke="#fff" stroke-width="1.100" stroke-linecap="round"/></svg>
</div>
</body>
</html>
